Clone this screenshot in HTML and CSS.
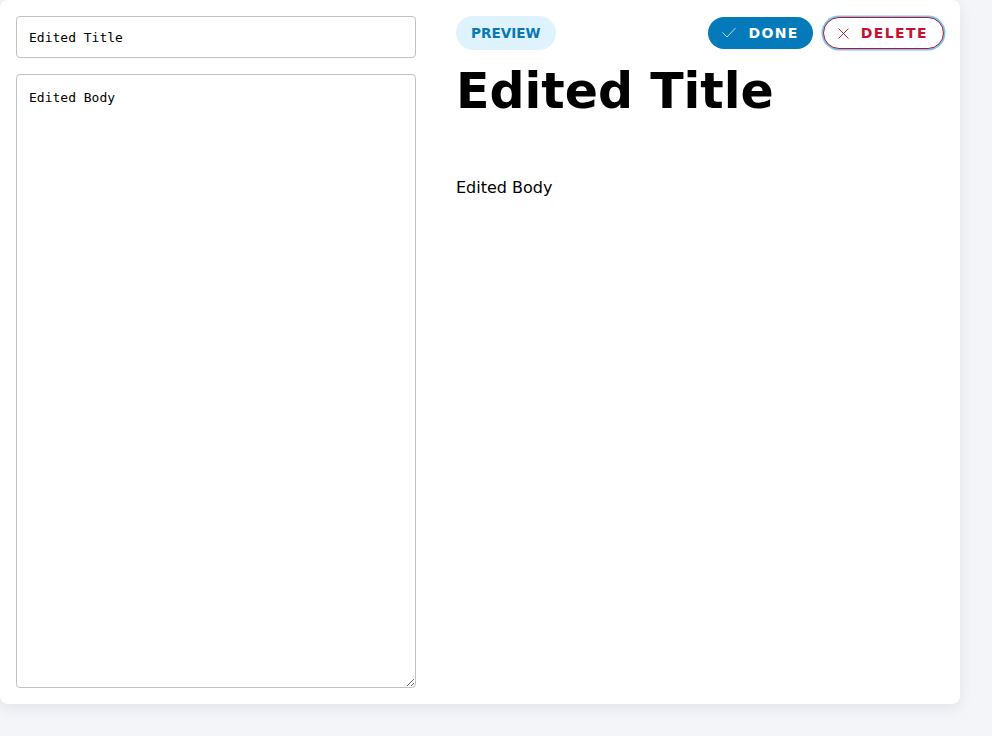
FILE: index.html
```html
<!DOCTYPE html>
<html lang="en">
<head>
<meta charset="utf-8">
<title>Edit note</title>
<link rel="stylesheet" href="styles.css">
</head>
<body>
<main class="card">
  <section class="editor">
    <input class="title-input" type="text" value="Edited Title">
    <textarea class="body-input">Edited Body</textarea>
  </section>
  <section class="preview">
    <div class="toolbar">
      <span class="pill">PREVIEW</span>
      <div class="actions">
        <button class="btn btn-done" type="button">
          <svg class="ico-check" width="14" height="12" viewBox="0 0 14 12"><polyline points="0.5,5.5 5,10 13.5,1" fill="none" stroke="#cfe3f1" stroke-width="0.9"/></svg>
          <span>DONE</span>
        </button>
        <button class="btn btn-delete" type="button">
          <svg class="ico-x" width="11" height="11" viewBox="0 0 11 11"><path d="M0.5 0.5 L10.5 10.5 M10.5 0.5 L0.5 10.5" fill="none" stroke="#c8102e" stroke-width="0.9"/></svg>
          <span>DELETE</span>
        </button>
      </div>
    </div>
    <h1 class="preview-title">Edited Title</h1>
    <p class="preview-body">Edited Body</p>
  </section>
</main>
</body>
</html>
```
FILE: styles.css
```css
html, body {
  margin: 0;
  padding: 0;
  background: #f4f5f9;
  height: 100%;
}
body {
  font-family: "DejaVu Sans", sans-serif;
  color: #000;
}
.card {
  width: 960px;
  box-sizing: border-box;
  background: #fff;
  border-radius: 8px;
  box-shadow: 0 4px 14px rgba(30, 40, 70, 0.09);
  padding: 16px;
  display: grid;
  grid-template-columns: 400px 1fr;
  column-gap: 40px;
}
.editor {
  display: flex;
  flex-direction: column;
  gap: 16px;
}
.title-input, .body-input {
  font-family: "DejaVu Sans Mono", monospace;
  font-size: 13px;
  color: #000;
  border: 1px solid #c2c2c6;
  border-radius: 4px;
  box-sizing: border-box;
  width: 100%;
  margin: 0;
  background: #fff;
}
.title-input {
  height: 42px;
  padding: 0 12px;
}
.body-input {
  height: 614px;
  padding: 13px 12px 12px;
  line-height: 1.5;
  resize: vertical;
}
.preview {
  display: flex;
  flex-direction: column;
}
.toolbar {
  display: flex;
  justify-content: space-between;
  align-items: center;
  height: 34px;
}
.pill {
  display: inline-flex;
  align-items: center;
  height: 34px;
  padding: 0 15px;
  border-radius: 17px;
  background: #def3fd;
  color: #0778b8;
  font-weight: bold;
  font-size: 13.6px;
}
.actions {
  display: flex;
  align-items: center;
  gap: 10px;
}
.btn {
  display: inline-flex;
  align-items: center;
  gap: 12px;
  height: 32px;
  box-sizing: border-box;
  border-radius: 16px;
  font-family: "DejaVu Sans", sans-serif;
  font-weight: bold;
  font-size: 14px;
  letter-spacing: 0.1em;
  cursor: pointer;
  margin: 0;
}
.btn-done {
  background: #057abb;
  color: #fff;
  border: none;
  padding: 0 14px 0 14px;
}
.btn-delete {
  background: #fff;
  color: #c8102e;
  border: 1px solid #c8102e;
  padding: 0 15px 0 14px;
  box-shadow: 0 0 0 1.5px #72c8f2;
}
.ico-check, .ico-x {
  display: block;
  flex: none;
}
.preview-title {
  margin: 13px 0 0;
  font-size: 49px;
  font-weight: bold;
  line-height: normal;
}
.preview-body {
  margin: 58px 0 0;
  font-size: 16px;
  line-height: normal;
}
```
